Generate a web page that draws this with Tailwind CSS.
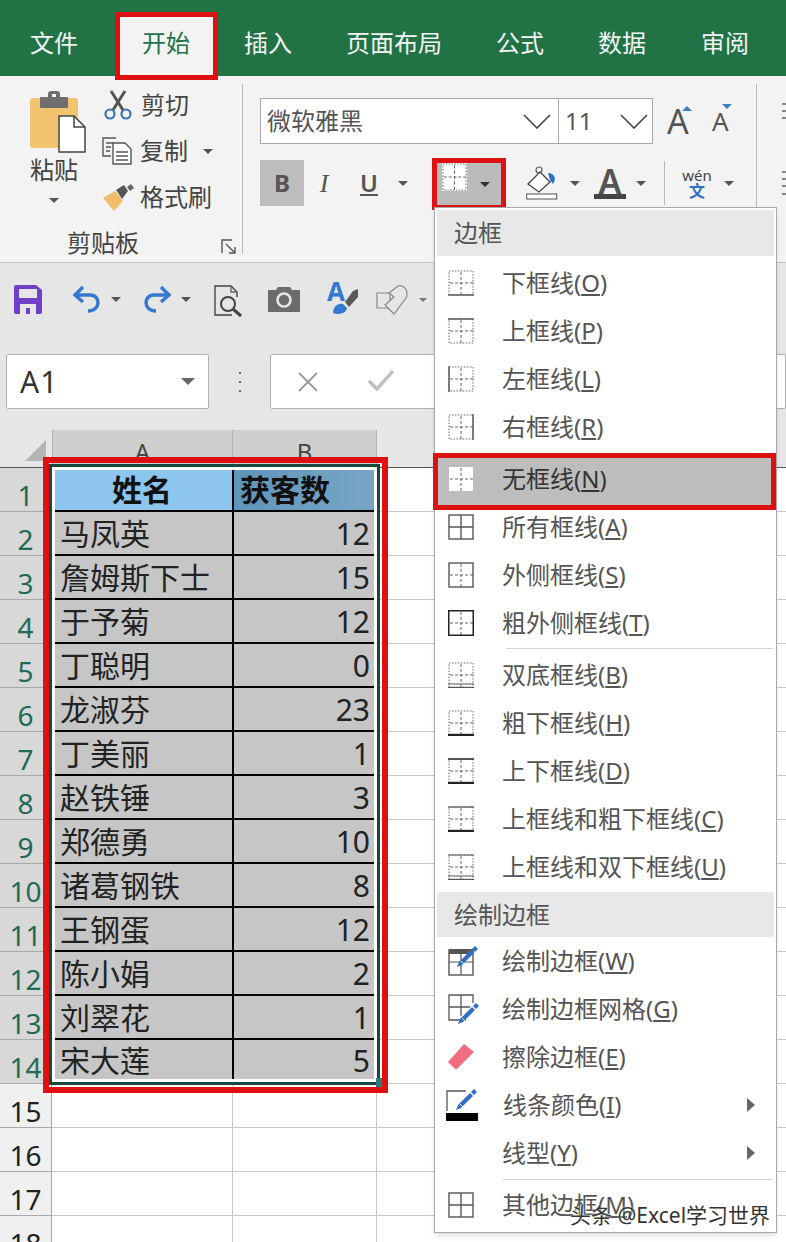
<!DOCTYPE html>
<html lang="zh-CN">
<head>
<meta charset="utf-8">
<script src="https://cdn.jsdelivr.net/npm/@tailwindcss/browser@4"></script>
</head>
<body class="m-0">
<svg class="absolute w-0 h-0" aria-hidden="true"><defs>
  <g id="dots" fill="none" stroke="#666" stroke-width="1" stroke-dasharray="1.5 1.5"><rect x="1" y="1" width="24" height="24"/></g>
  <g id="mid" fill="none" stroke="#666" stroke-width="1" stroke-dasharray="3 2"><path d="M13 2V25M2 13H25"/></g>
  <g id="pen"><path d="M2 17 L0 22 L5 20 L17 8 L14 5Z" fill="#2f6fc4"/><path d="M15 4 L18 1 L21 4 L18 7Z" fill="#2f6fc4"/><path d="M4 16 L7 19" stroke="#fff" stroke-width="1"/></g>
</defs></svg>

<div class="relative w-[786px] h-[1242px] overflow-hidden bg-white font-['Noto_Sans','Noto_Sans_CJK_SC',sans-serif] text-[#444]">

  <!-- tab bar -->
  <div class="relative z-10 flex items-center h-[76px] pt-[10px] pl-[30px] bg-[#217346] text-[24px] text-[#f4f4f4]">
    <span>文件</span>
    <span class="relative ml-[64px] text-[#217346]">
      <span class="absolute left-[-27px] top-[-13px] w-[103px] h-[68px] border-[5px] border-[#dd1111] bg-[#f3f3f3]"></span>
      <span class="relative">开始</span>
    </span>
    <span class="ml-[54px]">插入</span>
    <span class="ml-[54px]">页面布局</span>
    <span class="ml-[54px]">公式</span>
    <span class="ml-[54px]">数据</span>
    <span class="ml-[55px]">审阅</span>
  </div>

  <!-- ribbon -->
  <div class="flex h-[186px] bg-[#f3f3f3] text-[24px]">
    <!-- clipboard group -->
    <div class="w-[242px] shrink-0">
      <div class="flex h-[148px]">
        <div class="w-[100px] shrink-0 pl-[30px] pt-[14px] flex flex-col items-start">
          <svg width="57" height="64" viewBox="0 0 57 64">
            <rect x="0" y="8" width="48" height="50" rx="3" fill="#f2c46f"/>
            <rect x="10" y="7" width="28" height="11" rx="1" fill="#6e6e6e"/>
            <rect x="18" y="1" width="12" height="9" rx="3" fill="#6e6e6e"/>
            <rect x="22" y="4" width="4" height="3" fill="#f3f3f3"/>
            <path d="M29 26H44L55 37V62H29Z" fill="#fff" stroke="#444" stroke-width="1.5"/>
            <path d="M44 26V37H55" fill="none" stroke="#444" stroke-width="1.5"/>
          </svg>
          <span class="leading-[30px] mt-[1px]">粘贴</span>
          <span class="ml-[19px] mt-[13px] w-0 h-0 border-x-[5px] border-x-transparent border-t-[5px] border-t-[#555]"></span>
        </div>
        <div class="pt-[6px] flex flex-col">
          <div class="flex items-center h-[46px]">
            <svg class="ml-[4px]" width="28" height="30" viewBox="0 0 28 30">
              <path d="M7 1L19 20M21 1L9 20" stroke="#555" stroke-width="3" fill="none"/>
              <circle cx="6" cy="24" r="4.5" fill="none" stroke="#3b72b8" stroke-width="2.2"/>
              <circle cx="22" cy="24" r="4.5" fill="none" stroke="#3b72b8" stroke-width="2.2"/>
            </svg>
            <span class="ml-[9px]">剪切</span>
          </div>
          <div class="flex items-center h-[46px]">
            <svg class="ml-[2px]" width="30" height="28" viewBox="0 0 30 28" fill="none" stroke="#555" stroke-width="1.4">
              <path d="M14 1H1V19H9"/><path d="M4 6H11M4 10H9M4 14H8"/>
              <path d="M11 6H23L29 12V27H11Z" fill="#fff"/><path d="M14 15H26M14 19H26M14 23H26"/>
            </svg>
            <span class="ml-[8px]">复制</span>
            <span class="ml-[15px] w-0 h-0 border-x-[5px] border-x-transparent border-t-[5px] border-t-[#555]"></span>
          </div>
          <div class="flex items-center h-[46px]">
            <svg class="ml-[3px]" width="31" height="27" viewBox="0 0 31 27">
              <path d="M0 14L12 7L20 17L11 27Z" fill="#f0bd6b"/>
              <path d="M13 6L21 1L25 7L19 15Z" fill="#555"/>
              <path d="M24 3L28 0L31 4L27 7Z" fill="#666"/>
            </svg>
            <span class="ml-[6px]">格式刷</span>
          </div>
        </div>
      </div>
      <div class="flex items-center h-[38px] pl-[67px]">
        <span>剪贴板</span>
        <svg class="ml-[82px] mt-[8px]" width="16" height="16" viewBox="0 0 16 16" fill="none" stroke="#555" stroke-width="1.4">
          <path d="M1 14V1H11"/><path d="M5 5L14 14M14 8V14H8"/>
        </svg>
      </div>
    </div>
    <div class="w-px h-[170px] mt-[8px] bg-[#b8b8b8] shrink-0"></div>

    <!-- font group -->
    <div class="w-[513px] shrink-0 pl-[17px] pt-[22px]">
      <div class="flex items-center h-[46px]">
        <div class="flex items-center justify-between w-[299px] h-[46px] pl-[6px] pr-[7px] bg-white border border-[#a8a8a8] text-[#555]">
          <span>微软雅黑</span>
          <svg width="28" height="16" viewBox="0 0 28 16" fill="none" stroke="#444" stroke-width="1.6"><path d="M1 2L14 15L27 2"/></svg>
        </div>
        <div class="flex items-center justify-between w-[95px] h-[46px] -ml-px pl-[6px] pr-[4px] bg-white border border-[#a8a8a8] text-[#555]">
          <span>11</span>
          <svg width="28" height="16" viewBox="0 0 28 16" fill="none" stroke="#444" stroke-width="1.6"><path d="M1 2L14 15L27 2"/></svg>
        </div>
        <div class="relative ml-[14px] w-[24px] text-[34px] leading-[46px] text-[#555]">A
          <span class="absolute left-[15px] top-[8px] w-0 h-0 border-x-[5px] border-x-transparent border-b-[5px] border-b-[#3f7fc8]"></span>
        </div>
        <div class="relative ml-[21px] w-[18px] text-[26px] leading-[46px] text-[#555]">A
          <span class="absolute left-[10px] top-[6px] w-0 h-0 border-x-[5px] border-x-transparent border-t-[5px] border-t-[#3f7fc8]"></span>
        </div>
      </div>
      <div class="flex items-center h-[46px] mt-[16px]">
        <div class="flex items-center justify-center w-[44px] h-[46px] bg-[#bdbdbd] font-bold text-[#555]">B</div>
        <div class="w-[40px] text-center italic font-['Liberation_Serif',serif] text-[26px] text-[#555]">I</div>
        <div class="w-[50px] text-center"><span class="underline font-semibold text-[#555]">U</span></div>
        <span class="ml-[4px] w-0 h-0 border-x-[5px] border-x-transparent border-t-[5px] border-t-[#555]"></span>
        <div class="ml-[24px] flex items-center w-[74px] h-[52px] shrink-0 mt-[2px] border-[5px] border-[#dd1111] bg-[#bbbbbb]">
          <svg class="ml-[5px] self-start" width="25" height="28" viewBox="0 0 26 26" preserveAspectRatio="none"><rect width="26" height="26" fill="#fff"/><use href="#dots"/><use href="#mid"/></svg>
          <span class="ml-[13px] w-0 h-0 border-x-[5px] border-x-transparent border-t-[5px] border-t-[#333]"></span>
        </div>
        <svg class="ml-[20px]" width="32" height="34" viewBox="0 0 32 34">
          <path d="M14 6L2 18L13 26L24 16Z" fill="#fff" stroke="#444" stroke-width="1.3"/>
          <circle cx="13" cy="4" r="3" fill="none" stroke="#555" stroke-width="1.2"/>
          <path d="M22 7C28 7 31 12 27 18L24 14Z" fill="#2f6fc4"/>
          <rect x="0.7" y="28" width="30" height="5" fill="#fff" stroke="#555"/>
        </svg>
        <span class="ml-[12px] w-0 h-0 border-x-[5px] border-x-transparent border-t-[5px] border-t-[#555]"></span>
        <div class="ml-[14px] w-[32px] flex flex-col items-center">
          <span class="text-[34px] leading-[26px] font-semibold text-[#555]">A</span>
          <span class="w-[32px] h-[5px] bg-[#444]"></span>
        </div>
        <span class="ml-[10px] w-0 h-0 border-x-[5px] border-x-transparent border-t-[5px] border-t-[#555]"></span>
        <div class="ml-[18px] w-px h-[44px] bg-[#b8b8b8]"></div>
        <div class="ml-[16px] w-[32px] flex flex-col items-center">
          <span class="text-[15px] leading-[16px] text-[#444]">wén</span>
          <span class="text-[16px] leading-[16px] font-bold text-[#2f6fc4]">文</span>
        </div>
        <span class="ml-[11px] w-0 h-0 border-x-[5px] border-x-transparent border-t-[5px] border-t-[#555]"></span>
      </div>
    </div>
    <div class="w-px h-[170px] mt-[8px] bg-[#b8b8b8] shrink-0"></div>
    <div class="pl-[25px] pt-[27px] flex flex-col gap-[52px]">
      <svg width="6" height="16" viewBox="0 0 6 16" stroke="#666" stroke-width="1.4"><path d="M0 1H6M0 8H6M0 15H6"/></svg>
      <svg width="6" height="24" viewBox="0 0 6 24" stroke="#666" stroke-width="1.4"><path d="M0 1H6M0 8H6M0 15H6M0 23H6"/></svg>
    </div>
  </div>

  <!-- quick access -->
  <div class="flex items-start h-[90px] pt-[22px] pl-[14px] bg-[#e6e6e6] border-t border-[#c4c4c4]">
    <svg width="28" height="29" viewBox="0 0 28 29">
      <path d="M2 0H22L28 5V27A2 2 0 0 1 26 29H2A2 2 0 0 1 0 27V2A2 2 0 0 1 2 0Z" fill="#7040c8"/>
      <rect x="5" y="4" width="18" height="9" fill="#e6e6e6"/>
      <path d="M6 29V19H22V29H16V23H12V29Z" fill="#e6e6e6"/>
    </svg>
    <svg class="ml-[30px]" width="30" height="28" viewBox="0 0 30 28" fill="none" stroke="#3578d0" stroke-width="3.4">
      <path d="M11 2L3 10L11 17"/><path d="M4 10H18C29 10 29 26 16 26"/>
    </svg>
    <span class="ml-[9px] mt-[12px] w-0 h-0 border-x-[5px] border-x-transparent border-t-[5px] border-t-[#555]"></span>
    <svg class="ml-[21px]" width="30" height="28" viewBox="0 0 30 28" fill="none" stroke="#3578d0" stroke-width="3.4">
      <path d="M19 2L27 10L19 17"/><path d="M26 10H12C1 10 1 26 14 26"/>
    </svg>
    <span class="ml-[9px] mt-[12px] w-0 h-0 border-x-[5px] border-x-transparent border-t-[5px] border-t-[#555]"></span>
    <svg class="ml-[23px]" width="30" height="33" viewBox="0 0 30 33" fill="none" stroke="#444" stroke-width="1.4">
      <path d="M18 30H1V1H17L23 7V12"/><path d="M17 1V7H23" stroke="#666"/>
      <circle cx="14" cy="19" r="7" fill="#e6e6e6" stroke-width="2"/><path d="M19 24L27 31" stroke-width="3"/>
    </svg>
    <svg class="ml-[24px] mt-[2px]" width="32" height="25" viewBox="0 0 32 25">
      <path d="M0 3H8L10 0H22L24 3H32V25H0Z" fill="#6b6b6b"/>
      <circle cx="16" cy="13" r="6.5" fill="none" stroke="#e6e6e6" stroke-width="2.6"/>
    </svg>
    <div class="ml-[27px] mt-[-4px] relative w-[31px] h-[34px]">
      <span class="absolute left-0 top-[-5px] text-[26px] leading-[30px] font-bold text-[#3578d0]">A</span>
      <svg class="absolute left-[6px] top-[8px]" width="25" height="26" viewBox="0 0 25 26">
        <path d="M0 24C0 17 6 14 10 15L14 19C13 25 5 26 0 24Z" fill="#3578d0"/>
        <path d="M12 13L20 2L25 0V8L16 18Z" fill="#5a5a5a"/>
      </svg>
    </div>
    <svg class="ml-[18px]" width="32" height="32" viewBox="0 0 32 32" fill="none" stroke="#888" stroke-width="1.2">
      <path d="M1 8H14V23H1Z"/><path d="M13 8L22 1C28 -1 33 6 30 13L18 29L9 20L18 12Z" fill="#e6e6e6"/>
    </svg>
    <span class="ml-[11px] mt-[13px] w-0 h-0 border-x-[4px] border-x-transparent border-t-[4px] border-t-[#777]"></span>
  </div>

  <!-- formula row -->
  <div class="flex items-start h-[78px] pt-[2px] pl-[6px] bg-[#e6e6e6]">
    <div class="flex items-center justify-between w-[203px] h-[55px] pl-[13px] pr-[13px] bg-white border border-[#b0b0b0] rounded-[2px]">
      <span class="text-[30px] tracking-[1px] text-[#333]">A1</span>
      <span class="w-0 h-0 border-x-[7px] border-x-transparent border-t-[7px] border-t-[#666]"></span>
    </div>
    <div class="flex flex-col gap-[7px] ml-[30px] mt-[18px]">
      <span class="w-[2px] h-[2px] bg-[#666]"></span><span class="w-[2px] h-[2px] bg-[#666]"></span><span class="w-[2px] h-[2px] bg-[#666]"></span>
    </div>
    <div class="flex items-center ml-[29px] w-[516px] h-[55px] pl-[27px] bg-white border border-[#b0b0b0] rounded-[2px]">
      <svg width="20" height="20" viewBox="0 0 20 20" stroke="#9a9a9a" stroke-width="1.8"><path d="M1 1L19 19M19 1L1 19"/></svg>
      <svg class="ml-[50px] mb-[3px]" width="26" height="22" viewBox="0 0 26 22" fill="none" stroke="#c0c0c0" stroke-width="3.5"><path d="M1 12L9 20L25 2"/></svg>
    </div>
  </div>

  <!-- sheet -->
  <div class="flex h-[38px] bg-[#e6e6e6] text-[24px] border-b border-[#555]">
    <div class="w-[52px] relative shrink-0">
      <svg class="absolute left-[25px] top-[10px]" width="21" height="21" viewBox="0 0 21 21"><path d="M21 0V21H0Z" fill="#b5b5b5"/></svg>
    </div>
    <div class="w-[181px] shrink-0 bg-[#cfcfcf] border-r border-[#b0b0b0] text-center leading-[44px] border-l">A</div>
    <div class="w-[144px] shrink-0 bg-[#cfcfcf] border-r border-[#b0b0b0] text-center leading-[44px]">B</div>
  </div>

  <div class="flex h-[44px]"><div class="w-[52px] flex items-center justify-center pt-[10px] text-[28px] text-[#1f6a55] bg-[#d8d8d8] border-r border-b border-[#a8a8a8]">1</div><div class="w-[182px] flex items-center justify-center bg-[#8cc6ee] border-r-2 border-b-2 border-black text-[30px] font-bold text-[#111]">姓名</div><div class="w-[143px] flex items-center pl-[6px] bg-linear-to-r from-[#5f95bb] to-[#78a6c5] border-b-2 border-black text-[30px] font-bold text-[#111]">获客数</div><div class="flex-1 border-b border-[#c8c8c8]"></div></div>
  <div class="flex h-[44px]"><div class="w-[52px] flex items-center justify-center pt-[10px] text-[28px] text-[#1f6a55] bg-[#d8d8d8] border-r border-b border-[#a8a8a8]">2</div><div class="w-[182px] flex items-center pl-[8px] bg-[#c6c6c6] border-r-2 border-b-2 border-black text-[30px] text-[#222]">马凤英</div><div class="w-[143px] flex items-center justify-end pr-[7px] bg-[#c6c6c6] border-b-2 border-black text-[30px] text-[#222]">12</div><div class="flex-1 border-b border-[#c8c8c8]"></div></div>
  <div class="flex h-[44px]"><div class="w-[52px] flex items-center justify-center pt-[10px] text-[28px] text-[#1f6a55] bg-[#d8d8d8] border-r border-b border-[#a8a8a8]">3</div><div class="w-[182px] flex items-center pl-[8px] bg-[#c6c6c6] border-r-2 border-b-2 border-black text-[30px] text-[#222]">詹姆斯下士</div><div class="w-[143px] flex items-center justify-end pr-[7px] bg-[#c6c6c6] border-b-2 border-black text-[30px] text-[#222]">15</div><div class="flex-1 border-b border-[#c8c8c8]"></div></div>
  <div class="flex h-[44px]"><div class="w-[52px] flex items-center justify-center pt-[10px] text-[28px] text-[#1f6a55] bg-[#d8d8d8] border-r border-b border-[#a8a8a8]">4</div><div class="w-[182px] flex items-center pl-[8px] bg-[#c6c6c6] border-r-2 border-b-2 border-black text-[30px] text-[#222]">于予菊</div><div class="w-[143px] flex items-center justify-end pr-[7px] bg-[#c6c6c6] border-b-2 border-black text-[30px] text-[#222]">12</div><div class="flex-1 border-b border-[#c8c8c8]"></div></div>
  <div class="flex h-[44px]"><div class="w-[52px] flex items-center justify-center pt-[10px] text-[28px] text-[#1f6a55] bg-[#d8d8d8] border-r border-b border-[#a8a8a8]">5</div><div class="w-[182px] flex items-center pl-[8px] bg-[#c6c6c6] border-r-2 border-b-2 border-black text-[30px] text-[#222]">丁聪明</div><div class="w-[143px] flex items-center justify-end pr-[7px] bg-[#c6c6c6] border-b-2 border-black text-[30px] text-[#222]">0</div><div class="flex-1 border-b border-[#c8c8c8]"></div></div>
  <div class="flex h-[44px]"><div class="w-[52px] flex items-center justify-center pt-[10px] text-[28px] text-[#1f6a55] bg-[#d8d8d8] border-r border-b border-[#a8a8a8]">6</div><div class="w-[182px] flex items-center pl-[8px] bg-[#c6c6c6] border-r-2 border-b-2 border-black text-[30px] text-[#222]">龙淑芬</div><div class="w-[143px] flex items-center justify-end pr-[7px] bg-[#c6c6c6] border-b-2 border-black text-[30px] text-[#222]">23</div><div class="flex-1 border-b border-[#c8c8c8]"></div></div>
  <div class="flex h-[44px]"><div class="w-[52px] flex items-center justify-center pt-[10px] text-[28px] text-[#1f6a55] bg-[#d8d8d8] border-r border-b border-[#a8a8a8]">7</div><div class="w-[182px] flex items-center pl-[8px] bg-[#c6c6c6] border-r-2 border-b-2 border-black text-[30px] text-[#222]">丁美丽</div><div class="w-[143px] flex items-center justify-end pr-[7px] bg-[#c6c6c6] border-b-2 border-black text-[30px] text-[#222]">1</div><div class="flex-1 border-b border-[#c8c8c8]"></div></div>
  <div class="flex h-[44px]"><div class="w-[52px] flex items-center justify-center pt-[10px] text-[28px] text-[#1f6a55] bg-[#d8d8d8] border-r border-b border-[#a8a8a8]">8</div><div class="w-[182px] flex items-center pl-[8px] bg-[#c6c6c6] border-r-2 border-b-2 border-black text-[30px] text-[#222]">赵铁锤</div><div class="w-[143px] flex items-center justify-end pr-[7px] bg-[#c6c6c6] border-b-2 border-black text-[30px] text-[#222]">3</div><div class="flex-1 border-b border-[#c8c8c8]"></div></div>
  <div class="flex h-[44px]"><div class="w-[52px] flex items-center justify-center pt-[10px] text-[28px] text-[#1f6a55] bg-[#d8d8d8] border-r border-b border-[#a8a8a8]">9</div><div class="w-[182px] flex items-center pl-[8px] bg-[#c6c6c6] border-r-2 border-b-2 border-black text-[30px] text-[#222]">郑德勇</div><div class="w-[143px] flex items-center justify-end pr-[7px] bg-[#c6c6c6] border-b-2 border-black text-[30px] text-[#222]">10</div><div class="flex-1 border-b border-[#c8c8c8]"></div></div>
  <div class="flex h-[44px]"><div class="w-[52px] flex items-center justify-center pt-[10px] text-[28px] text-[#1f6a55] bg-[#d8d8d8] border-r border-b border-[#a8a8a8]">10</div><div class="w-[182px] flex items-center pl-[8px] bg-[#c6c6c6] border-r-2 border-b-2 border-black text-[30px] text-[#222]">诸葛钢铁</div><div class="w-[143px] flex items-center justify-end pr-[7px] bg-[#c6c6c6] border-b-2 border-black text-[30px] text-[#222]">8</div><div class="flex-1 border-b border-[#c8c8c8]"></div></div>
  <div class="flex h-[44px]"><div class="w-[52px] flex items-center justify-center pt-[10px] text-[28px] text-[#1f6a55] bg-[#d8d8d8] border-r border-b border-[#a8a8a8]">11</div><div class="w-[182px] flex items-center pl-[8px] bg-[#c6c6c6] border-r-2 border-b-2 border-black text-[30px] text-[#222]">王钢蛋</div><div class="w-[143px] flex items-center justify-end pr-[7px] bg-[#c6c6c6] border-b-2 border-black text-[30px] text-[#222]">12</div><div class="flex-1 border-b border-[#c8c8c8]"></div></div>
  <div class="flex h-[44px]"><div class="w-[52px] flex items-center justify-center pt-[10px] text-[28px] text-[#1f6a55] bg-[#d8d8d8] border-r border-b border-[#a8a8a8]">12</div><div class="w-[182px] flex items-center pl-[8px] bg-[#c6c6c6] border-r-2 border-b-2 border-black text-[30px] text-[#222]">陈小娟</div><div class="w-[143px] flex items-center justify-end pr-[7px] bg-[#c6c6c6] border-b-2 border-black text-[30px] text-[#222]">2</div><div class="flex-1 border-b border-[#c8c8c8]"></div></div>
  <div class="flex h-[44px]"><div class="w-[52px] flex items-center justify-center pt-[10px] text-[28px] text-[#1f6a55] bg-[#d8d8d8] border-r border-b border-[#a8a8a8]">13</div><div class="w-[182px] flex items-center pl-[8px] bg-[#c6c6c6] border-r-2 border-b-2 border-black text-[30px] text-[#222]">刘翠花</div><div class="w-[143px] flex items-center justify-end pr-[7px] bg-[#c6c6c6] border-b-2 border-black text-[30px] text-[#222]">1</div><div class="flex-1 border-b border-[#c8c8c8]"></div></div>
  <div class="flex h-[44px]"><div class="w-[52px] flex items-center justify-center pt-[10px] text-[28px] text-[#1f6a55] bg-[#d8d8d8] border-r border-b border-[#a8a8a8]">14</div><div class="w-[182px] flex items-center pl-[8px] pb-[4px] bg-[#c6c6c6] border-r-2 border-black text-[30px] text-[#222]">宋大莲</div><div class="w-[143px] flex items-center justify-end pr-[7px] pb-[4px] bg-[#c6c6c6] text-[30px] text-[#222]">5</div><div class="flex-1 border-b border-[#c8c8c8]"></div></div>
  <div class="flex h-[44px]"><div class="w-[52px] flex items-center justify-center pt-[10px] text-[28px] text-[#222] bg-[#f0f0f0] border-r border-b border-[#a8a8a8]">15</div><div class="w-[181px] border-r border-b border-[#c8c8c8]"></div><div class="w-[144px] border-r border-b border-[#c8c8c8]"></div><div class="flex-1 border-b border-[#c8c8c8]"></div></div>
  <div class="flex h-[44px]"><div class="w-[52px] flex items-center justify-center pt-[10px] text-[28px] text-[#222] bg-[#f0f0f0] border-r border-b border-[#a8a8a8]">16</div><div class="w-[181px] border-r border-b border-[#c8c8c8]"></div><div class="w-[144px] border-r border-b border-[#c8c8c8]"></div><div class="flex-1 border-b border-[#c8c8c8]"></div></div>
  <div class="flex h-[44px]"><div class="w-[52px] flex items-center justify-center pt-[10px] text-[28px] text-[#222] bg-[#f0f0f0] border-r border-b border-[#a8a8a8]">17</div><div class="w-[181px] border-r border-b border-[#c8c8c8]"></div><div class="w-[144px] border-r border-b border-[#c8c8c8]"></div><div class="flex-1 border-b border-[#c8c8c8]"></div></div>
  <div class="flex h-[44px]"><div class="w-[52px] flex items-center justify-center pt-[10px] text-[28px] text-[#222] bg-[#f0f0f0] border-r border-b border-[#a8a8a8]">18</div><div class="w-[181px] border-r border-b border-[#c8c8c8]"></div><div class="w-[144px] border-r border-b border-[#c8c8c8]"></div><div class="flex-1 border-b border-[#c8c8c8]"></div></div>

  <!-- selection + red frame over the table -->
  <div class="absolute left-[43px] top-[457px] w-[345px] h-[636px] border-[6px] border-[#dd1111]">
    <div class="absolute left-0 top-[1px] right-[2px] bottom-[2px] border-[3px] border-[#17493c]">
      <div class="h-full border-[3px] border-white"></div>
    </div>
  </div>
  <div class="absolute left-[376px] top-[1078px] w-[6px] h-[9px] bg-[#2d7a78]"></div>

  <!-- border dropdown -->
  <div class="absolute left-[434px] top-[207px] w-[343px] h-[1026px] bg-white border border-[#a8a8a8] shadow-md pt-[2px] px-[3px] text-[24px] text-[#555]">
    <div class="flex items-center h-[46px] pl-[17px] -mx-px bg-[#e8e8e8]">边框</div>
    <div class="-mx-[3px] mt-[3px]">
      <div class="flex items-center h-12 pl-[13px]"><svg class="w-[26px] mr-[28px]" width="26" height="26" viewBox="0 0 26 26"><use href="#dots"/><use href="#mid"/><path d="M0 25H26" stroke="#555" stroke-width="1.4"/></svg><span>下框线(<span class="underline">O</span>)</span></div>
      <div class="flex items-center h-12 pl-[13px]"><svg class="w-[26px] mr-[28px]" width="26" height="26" viewBox="0 0 26 26"><use href="#dots"/><use href="#mid"/><path d="M0 1H26" stroke="#555" stroke-width="1.4"/></svg><span>上框线(<span class="underline">P</span>)</span></div>
      <div class="flex items-center h-12 pl-[13px]"><svg class="w-[26px] mr-[28px]" width="26" height="26" viewBox="0 0 26 26"><use href="#dots"/><use href="#mid"/><path d="M1 0V26" stroke="#555" stroke-width="1.4"/></svg><span>左框线(<span class="underline">L</span>)</span></div>
      <div class="flex items-center h-12 pl-[13px]"><svg class="w-[26px] mr-[28px]" width="26" height="26" viewBox="0 0 26 26"><use href="#dots"/><use href="#mid"/><path d="M25 0V26" stroke="#555" stroke-width="1.4"/></svg><span>右框线(<span class="underline">R</span>)</span></div>
      <div class="relative flex items-center h-12 mt-[4px] pl-[13px] text-[#333]">
        <div class="absolute left-[-2px] right-0 top-[-2px] bottom-[-7px] border-[5px] border-[#dd1111] bg-[#bdbdbd]"></div>
        <svg class="relative w-[26px] mr-[28px]" width="26" height="26" viewBox="0 0 26 26"><rect x="1" y="1" width="24" height="24" fill="#fff"/><use href="#mid"/></svg><span class="relative">无框线(<span class="underline">N</span>)</span>
      </div>
      <div class="flex items-center h-12 pl-[13px]"><svg class="w-[26px] mr-[28px]" width="26" height="26" viewBox="0 0 26 26" fill="none" stroke="#555" stroke-width="1.4"><rect x="1" y="1" width="24" height="24"/><path d="M13 1V25M1 13H25"/></svg><span>所有框线(<span class="underline">A</span>)</span></div>
      <div class="flex items-center h-12 pl-[13px]"><svg class="w-[26px] mr-[28px]" width="26" height="26" viewBox="0 0 26 26"><use href="#mid"/><rect x="1" y="1" width="24" height="24" fill="none" stroke="#555" stroke-width="1.4"/></svg><span>外侧框线(<span class="underline">S</span>)</span></div>
      <div class="flex items-center h-12 pl-[13px]"><svg class="w-[26px] mr-[28px]" width="26" height="26" viewBox="0 0 26 26"><use href="#mid"/><rect x="0" y="0" width="26" height="26" fill="none" stroke="#222" stroke-width="3"/></svg><span>粗外侧框线(<span class="underline">T</span>)</span></div>
    </div>
    <div class="ml-[68px] h-px bg-[#d4d4d4] mt-px"></div>
    <div class="-mx-[3px] mt-[2px]">
      <div class="flex items-center h-12 pl-[13px]"><svg class="w-[26px] mr-[28px]" width="26" height="26" viewBox="0 0 26 26"><use href="#dots"/><use href="#mid"/><path d="M0 22H26M0 25.5H26" stroke="#555" stroke-width="1.2"/></svg><span>双底框线(<span class="underline">B</span>)</span></div>
      <div class="flex items-center h-12 pl-[13px]"><svg class="w-[26px] mr-[28px]" width="26" height="26" viewBox="0 0 26 26"><use href="#dots"/><use href="#mid"/><path d="M0 25H26" stroke="#222" stroke-width="2.4"/></svg><span>粗下框线(<span class="underline">H</span>)</span></div>
      <div class="flex items-center h-12 pl-[13px]"><svg class="w-[26px] mr-[28px]" width="26" height="26" viewBox="0 0 26 26"><use href="#dots"/><use href="#mid"/><path d="M0 1H26" stroke="#333" stroke-width="1.6"/><path d="M0 25H26" stroke="#222" stroke-width="2.4"/></svg><span>上下框线(<span class="underline">D</span>)</span></div>
      <div class="flex items-center h-12 pl-[13px]"><svg class="w-[26px] mr-[28px]" width="26" height="26" viewBox="0 0 26 26"><use href="#dots"/><use href="#mid"/><path d="M0 1H26" stroke="#555" stroke-width="1.2"/><path d="M0 25H26" stroke="#222" stroke-width="2.4"/></svg><span>上框线和粗下框线(<span class="underline">C</span>)</span></div>
      <div class="flex items-center h-12 pl-[13px]"><svg class="w-[26px] mr-[28px]" width="26" height="26" viewBox="0 0 26 26"><use href="#dots"/><use href="#mid"/><path d="M0 1H26M0 22H26M0 25.5H26" stroke="#555" stroke-width="1.2"/></svg><span>上框线和双下框线(<span class="underline">U</span>)</span></div>
    </div>
    <div class="flex items-center h-[45px] pl-[17px] -mx-px mt-px bg-[#e8e8e8]">绘制边框</div>
    <div class="-mx-[3px]">
      <div class="flex items-center h-12 pl-[13px]"><svg class="w-[31px] mr-[23px]" width="31" height="30" viewBox="0 0 31 30" fill="none"><rect x="1" y="4" width="24" height="25" stroke="#555" stroke-width="1.4"/><rect x="1" y="3" width="24" height="5" fill="#555"/><path d="M1 16H25M13 8V29" stroke="#555" stroke-width="1.2"/><use href="#pen" x="9" y="-1"/></svg><span>绘制边框(<span class="underline">W</span>)</span></div>
      <div class="flex items-center h-12 pl-[13px]"><svg class="w-[31px] mr-[23px]" width="31" height="30" viewBox="0 0 31 30" fill="none"><path d="M18 26H1V1H25V9M13 1V22M1 13H22" stroke="#555" stroke-width="1.3"/><use href="#pen" x="10" y="8"/></svg><span>绘制边框网格(<span class="underline">G</span>)</span></div>
      <div class="flex items-center h-12 pl-[13px]"><svg class="w-[26px] mr-[28px]" width="26" height="26" viewBox="0 0 26 26"><path d="M0 18L16 0L26 8L9 25H6Z" fill="#f26d80"/><path d="M1 20L7 26" stroke="#fff" stroke-width="1.4"/></svg><span>擦除边框(<span class="underline">E</span>)</span></div>
      <div class="flex items-center h-12 pl-[11px]"><svg class="w-[32px] mr-[25px]" width="32" height="32" viewBox="0 0 32 32" fill="none"><path d="M1 22V2H20" stroke="#555" stroke-width="1.3"/><use href="#pen" x="10" y="-1"/><rect x="0" y="24" width="32" height="8" fill="#000"/></svg><span>线条颜色(<span class="underline">I</span>)</span><span class="ml-auto mr-[21px] w-0 h-0 border-y-[7px] border-y-transparent border-l-[8px] border-l-[#666]"></span></div>
      <div class="flex items-center h-12 pl-[67px]"><span>线型(<span class="underline">Y</span>)</span><span class="ml-auto mr-[21px] w-0 h-0 border-y-[7px] border-y-transparent border-l-[8px] border-l-[#666]"></span></div>
    </div>
    <div class="ml-[65px] h-px bg-[#d4d4d4] mt-[2px]"></div>
    <div class="-mx-[3px] mt-[1px]">
      <div class="flex items-center h-12 pl-[13px]"><svg class="w-[26px] mr-[28px]" width="26" height="26" viewBox="0 0 26 26" fill="none" stroke="#555" stroke-width="1.4"><rect x="1" y="1" width="24" height="24"/><path d="M13 1V25M1 13H25"/></svg><span>其他边框(<span class="underline">M</span>)</span></div>
    </div>
  </div>

  <!-- watermark -->
  <div class="absolute left-[570px] top-[1201px] text-[21px] leading-[28px] text-[#333] [text-shadow:0_0_3px_white]">头条 @Excel学习世界</div>
</div>
</body>
</html>
